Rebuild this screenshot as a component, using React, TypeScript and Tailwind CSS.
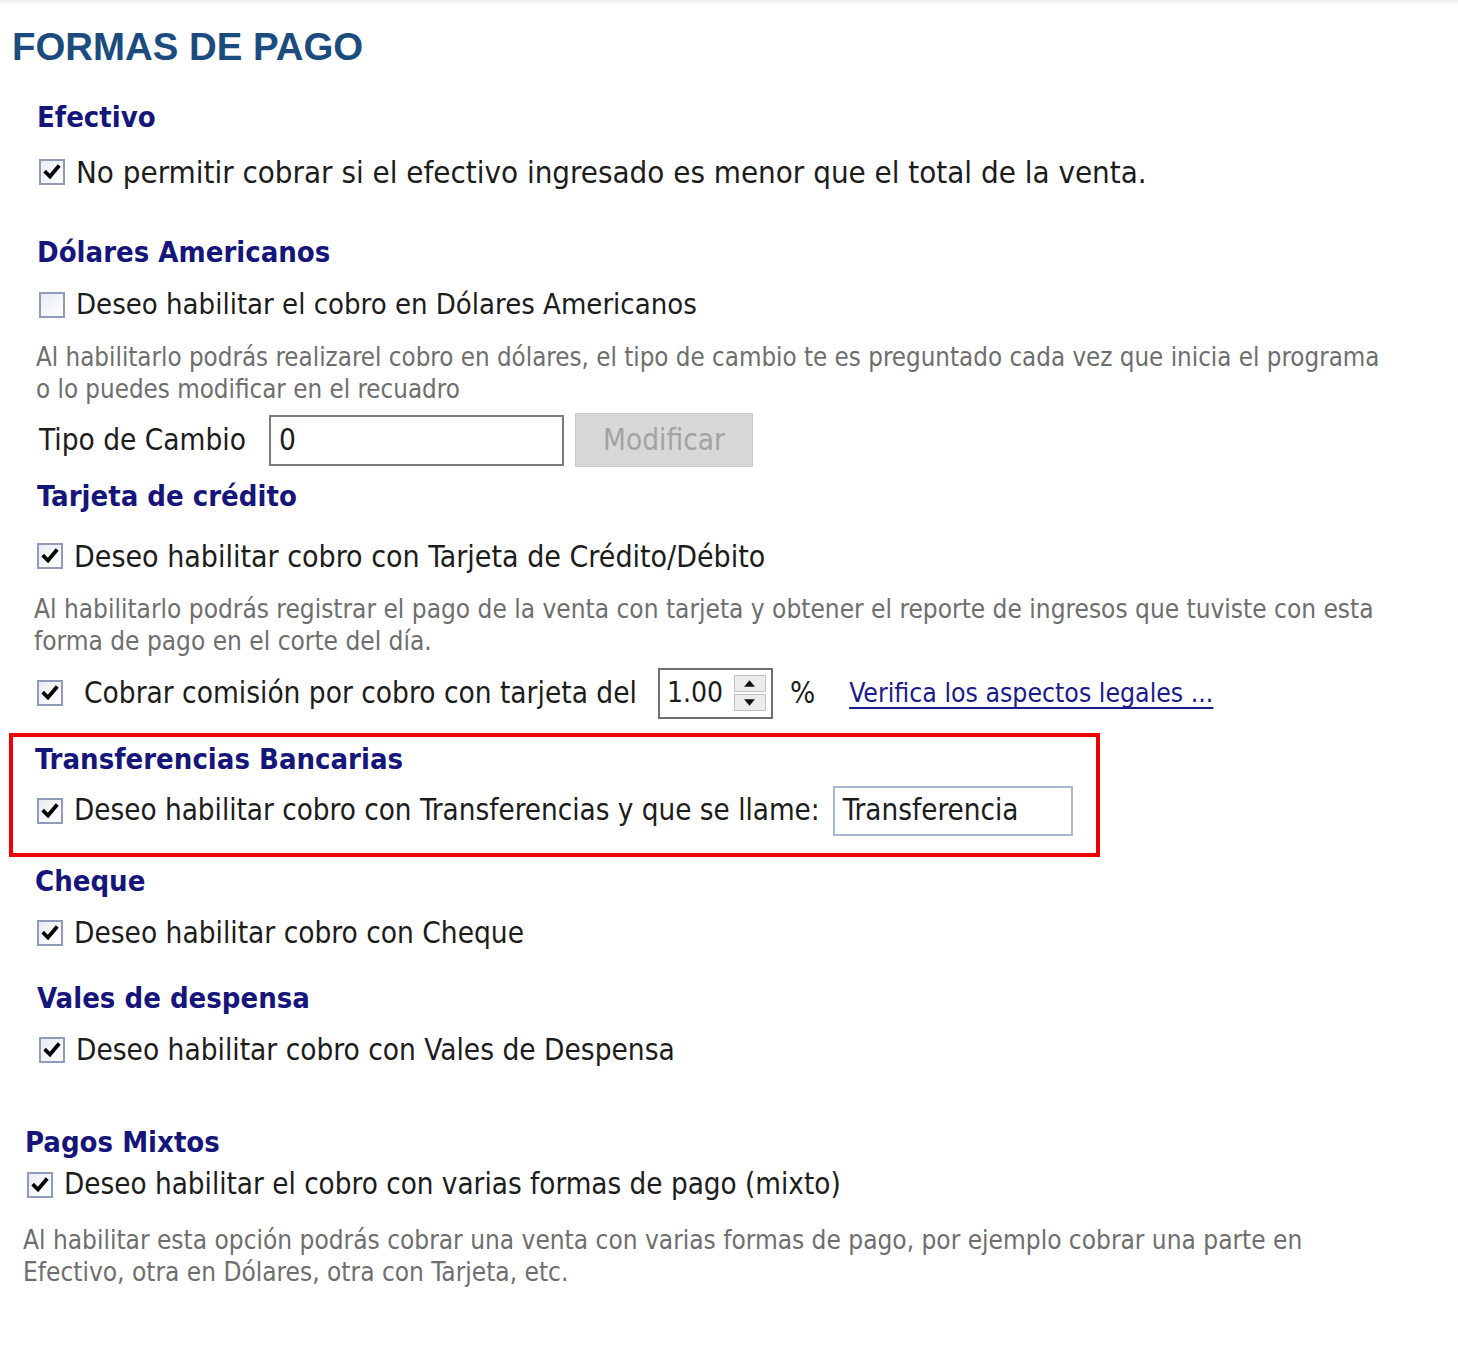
import React from "react";

function Check({ checked = true, className = "" }: { checked?: boolean; className?: string }) {
  return (
    <span
      className={
        "shrink-0 w-[26px] h-[26px] border-2 border-[#8f9bb8] bg-gradient-to-br from-[#e9ecf2] to-white flex items-center justify-center " +
        className
      }
    >
      {checked && (
        <svg width="18" height="18" viewBox="0 0 18 18">
          <path d="M3 9.5 L7 13.5 L15 4" fill="none" stroke="#000" strokeWidth="3.8" strokeLinecap="square" />
        </svg>
      )}
    </span>
  );
}

function Heading({ children, className = "" }: { children: React.ReactNode; className?: string }) {
  return (
    <div className={"h-[36px] flex items-center font-bold text-[29px] text-[#16167a] " + className}>
      {children}
    </div>
  );
}

function Gray({ children, className = "" }: { children: React.ReactNode; className?: string }) {
  return <div className={"leading-[32px] text-[#6e6e6e] " + className}>{children}</div>;
}

export default function App() {
  return (
    <div className="w-[1458px] h-[1350px] bg-white relative overflow-hidden font-['DejaVu_Sans_Condensed','DejaVu_Sans',sans-serif] text-[#1c1c1c]">
      <div className="h-[5px] w-full bg-gradient-to-b from-[#efefef] to-white" />
      <div className="pl-[12px] pt-[19px] leading-[46px] text-[38.4px] font-bold text-[#1b4c7d] font-['Liberation_Sans',Arial,sans-serif]">
        FORMAS DE PAGO
      </div>

      {/* Efectivo */}
      <div className="pl-[37px]">
        <Heading className="mt-[30px]">Efectivo</Heading>
        <div className="mt-[16px] h-[40px] flex items-center gap-[11px] text-[31px]">
          <Check className="ml-[2px]" />
          <span>No permitir cobrar si el efectivo ingresado es menor que el total de la venta.</span>
        </div>

        {/* Dolares */}
        <Heading className="mt-[43px]">Dólares Americanos</Heading>
        <div className="mt-[14px] h-[40px] flex items-center gap-[11px] text-[29px]">
          <Check checked={false} className="ml-[2px]" />
          <span>Deseo habilitar el cobro en Dólares Americanos</span>
        </div>
        <Gray className="mt-[16px] -ml-[1px] text-[25.7px]">
          Al habilitarlo podrás realizarel cobro en dólares, el tipo de cambio te es preguntado cada vez que inicia el programa
          <br />o lo puedes modificar en el recuadro
        </Gray>
        <div className="mt-[8px] h-[54px] flex items-center text-[29.5px]">
          <span className="ml-[2px] w-[230px]">Tipo de Cambio</span>
          <div className="w-[295px] h-[51px] border-2 border-[#7c7c7c] bg-white flex items-center pl-[8px]">0</div>
          <div className="ml-[11px] w-[178px] h-[54px] bg-[#d8d8d8] border border-[#cbcbcb] flex items-center justify-center text-[#a3a3a3]">
            Modificar
          </div>
        </div>

        {/* Tarjeta */}
        <Heading className="mt-[12px]">Tarjeta de crédito</Heading>
        <div className="mt-[21px] h-[40px] flex items-center gap-[11px] text-[30px]">
          <Check />
          <span>Deseo habilitar cobro con Tarjeta de Crédito/Débito</span>
        </div>
        <Gray className="mt-[17px] -ml-[3px] text-[26px]">
          Al habilitarlo podrás registrar el pago de la venta con tarjeta y obtener el reporte de ingresos que tuviste con esta
          <br />
          forma de pago en el corte del día.
        </Gray>
        <div className="mt-[10px] h-[52px] flex items-center text-[29.5px] whitespace-nowrap">
          <Check />
          <span className="ml-[21px]">Cobrar comisión por cobro con tarjeta del</span>
          <div className="ml-[21px] w-[115px] h-[51px] border-2 border-[#707070] bg-white flex items-center pl-[7px] pr-[5px] justify-between">
            <span className="text-[28px]">1.00</span>
            <div className="flex flex-col gap-[2px]">
              <div className="w-[32px] h-[17px] bg-[#ececec] border border-[#c2c2c2] flex items-center justify-center">
                <svg width="13" height="9" viewBox="0 0 12 8">
                  <path d="M6 1 L11 7 L1 7 Z" fill="#111" />
                </svg>
              </div>
              <div className="w-[32px] h-[17px] bg-[#ececec] border border-[#c2c2c2] flex items-center justify-center">
                <svg width="13" height="9" viewBox="0 0 12 8">
                  <path d="M1 1 L11 1 L6 7 Z" fill="#111" />
                </svg>
              </div>
            </div>
          </div>
          <span className="ml-[17px]">%</span>
          <a className="ml-[34px] text-[26.4px] text-[#1a1a8a] underline underline-offset-[5px] decoration-[2px]">Verifica los aspectos legales ...</a>
        </div>
      </div>

      {/* Transferencias */}
      <div className="mt-[14px] ml-[9px] w-[1091px] border-4 border-[#ee0000] pl-[22px] pt-[5px] pb-[17px]">
        <Heading>Transferencias Bancarias</Heading>
        <div className="mt-[8px] h-[50px] flex items-center text-[29.3px] whitespace-nowrap">
          <Check className="ml-[2px]" />
          <span className="ml-[11px]">Deseo habilitar cobro con Transferencias y que se llame:</span>
          <div className="ml-[13px] w-[240px] h-[50px] border-2 border-[#a9b7cf] bg-white flex items-center pl-[8px]">
            Transferencia
          </div>
        </div>
      </div>

      <div className="pl-[35px]">
        <Heading className="mt-[7px]">Cheque</Heading>
        <div className="mt-[13px] h-[40px] flex items-center gap-[11px] text-[29.5px]">
          <Check className="ml-[2px]" />
          <span>Deseo habilitar cobro con Cheque</span>
        </div>
        <Heading className="mt-[28px] ml-[2px]">Vales de despensa</Heading>
        <div className="mt-[13px] h-[40px] flex items-center gap-[11px] text-[29.5px]">
          <Check className="ml-[4px]" />
          <span>Deseo habilitar cobro con Vales de Despensa</span>
        </div>
      </div>

      <div className="pl-[25px]">
        <Heading className="mt-[55px]">Pagos Mixtos</Heading>
        <div className="mt-[4px] h-[40px] flex items-center gap-[11px] text-[29.3px]">
          <Check className="ml-[2px]" />
          <span>Deseo habilitar el cobro con varias formas de pago (mixto)</span>
        </div>
        <Gray className="mt-[19px] -ml-[2px] text-[26px]">
          Al habilitar esta opción podrás cobrar una venta con varias formas de pago, por ejemplo cobrar una parte en
          <br />
          Efectivo, otra en Dólares, otra con Tarjeta, etc.
        </Gray>
      </div>
    </div>
  );
}
